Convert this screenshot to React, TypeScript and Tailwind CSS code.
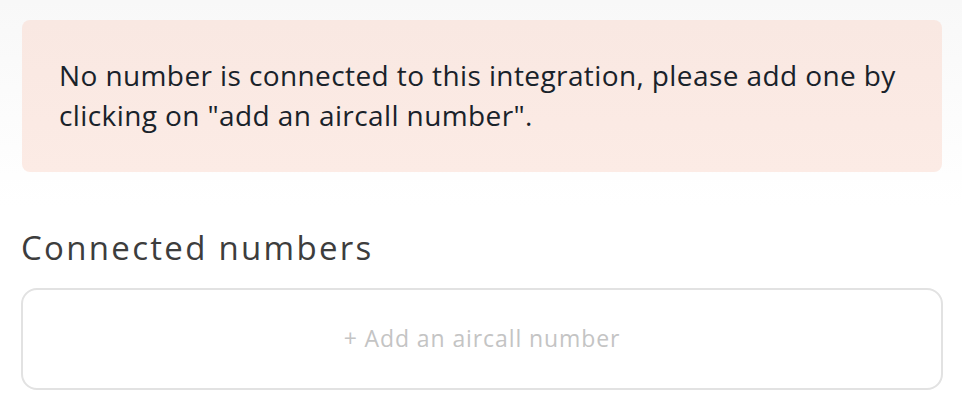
import React from 'react';

const App: React.FC = () => {
  return (
    <div className="min-h-[412px] w-full bg-gradient-to-b from-[#f8f8f8] via-white to-white pl-[21px] pr-[19px] pt-5 font-['Open_Sans',sans-serif]">
      <div className="mx-px rounded-lg bg-gradient-to-b from-[#f9e8e2] to-[#fcebe5] px-[37px] pb-[37px] pt-[35px] text-[28px] leading-[40px] tracking-[0.4px] text-[#19222a]">
        <p className="max-w-[850px]">
          No number is connected to this integration, please add one by clicking on "add an aircall number".
        </p>
      </div>
      <h2 className="mt-[52px] text-[33px] leading-[48px] tracking-[2.3px] text-[#3d3d3d]">Connected numbers</h2>
      <div className="mt-[16px] flex h-[102px] items-center justify-center rounded-2xl border-2 border-[#e2e2e2] bg-white">
        <button className="pb-0.5 text-[23px] tracking-[0.9px] text-[#c4c4c4]">+ Add an aircall number</button>
      </div>
    </div>
  );
};

export default App;
